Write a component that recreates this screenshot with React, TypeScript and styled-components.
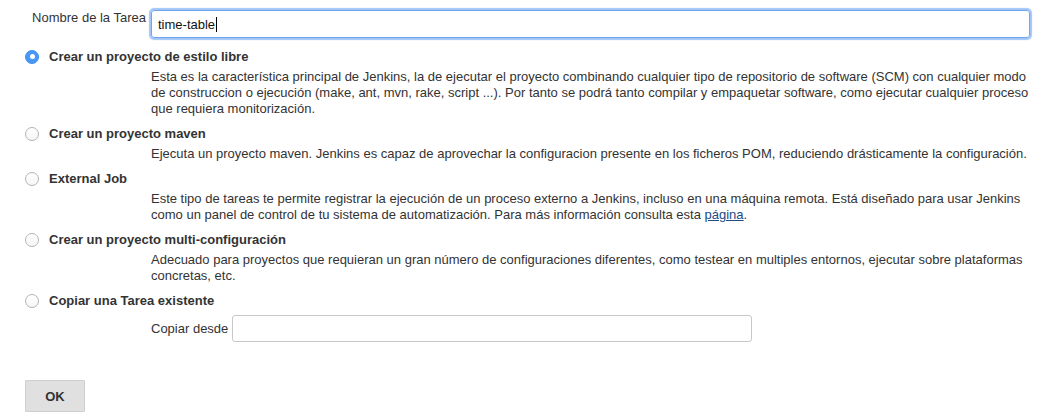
import React from "react";
import styled, { createGlobalStyle } from "styled-components";

const GlobalStyle = createGlobalStyle`
  html, body {
    margin: 0;
    padding: 0;
    background: #fff;
  }
  body {
    font-family: "Liberation Sans", Arial, Helvetica, sans-serif;
    font-size: 13px;
    color: #333;
  }
`;

const Page = styled.form`
  padding: 10px 0 0 0;
  width: 1039px;
  box-sizing: border-box;
`;

const NameRow = styled.div`
  display: flex;
  align-items: flex-start;
  padding-right: 9px;
`;

const NameLabel = styled.label`
  width: 151px;
  box-sizing: border-box;
  padding-right: 5px;
  text-align: right;
  line-height: 17px;
  margin-top: -1px;
  white-space: nowrap;
`;

const FocusedInput = styled.div`
  flex: 1;
  height: 28px;
  box-sizing: border-box;
  border: 1px solid #6ea5ee;
  border-radius: 3px;
  box-shadow: 0 0 1px 2px rgba(98, 158, 243, 0.6);
  padding: 0 6px;
  display: flex;
  align-items: center;
  color: #111;
`;

const Caret = styled.span`
  display: inline-block;
  width: 1px;
  height: 15px;
  background: #000;
  margin-left: 1px;
`;

const Options = styled.div`
  margin-top: 10px;
`;

const Option = styled.div`
  & + & {
    margin-top: 8px;
  }
`;

const OptionHeader = styled.label`
  display: flex;
  align-items: center;
  padding-left: 25px;
  gap: 10px;
  font-weight: bold;
  line-height: 17px;
`;

const Radio = styled.span<{ $checked?: boolean }>`
  width: 14px;
  height: 14px;
  box-sizing: border-box;
  border-radius: 50%;
  flex-shrink: 0;
  display: flex;
  align-items: center;
  justify-content: center;
  border: 1px solid ${(p) => (p.$checked ? "#3d8ef2" : "#b3b3b3")};
  background: ${(p) => (p.$checked ? "#4a97f5" : "linear-gradient(#fff, #f6f6f6)")};

  &::after {
    content: "";
    display: ${(p) => (p.$checked ? "block" : "none")};
    width: 5px;
    height: 5px;
    border-radius: 50%;
    background: #fff;
  }
`;

const Description = styled.div`
  padding: 0 5px 0 151px;
  margin-top: 4px;
  line-height: 16px;
`;

const Link = styled.a`
  color: #204a87;
  text-decoration: underline;
`;

const CopyRow = styled.div`
  display: flex;
  align-items: center;
  padding-left: 151px;
  margin-top: 6px;
  gap: 4px;
`;

const CopyInput = styled.input`
  width: 520px;
  height: 27px;
  box-sizing: border-box;
  border: 1px solid #c8c8c8;
  border-radius: 3px;
  padding: 0 6px;
  font: inherit;
  outline: none;
`;

const Footer = styled.div`
  padding: 38px 0 0 25px;
`;

const OkButton = styled.button`
  width: 60px;
  height: 32px;
  background: #e0e0e0;
  border: 1px solid #cfcfcf;
  border-radius: 1px;
  font-family: inherit;
  font-size: 13px;
  font-weight: bold;
  color: #333;
  padding: 0;
`;

const options = [
  {
    title: "Crear un proyecto de estilo libre",
    checked: true,
    text: (
      <>
        Esta es la característica principal de Jenkins, la de ejecutar el proyecto combinando cualquier tipo de
        repositorio de software (SCM) con cualquier modo de construccion o ejecución (make, ant, mvn, rake, script
        ...). Por tanto se podrá tanto compilar y empaquetar software, como ejecutar cualquier proceso que requiera
        monitorización.
      </>
    ),
  },
  {
    title: "Crear un proyecto maven",
    text: (
      <>
        Ejecuta un proyecto maven. Jenkins es capaz de aprovechar la configuracion presente en los ficheros POM,
        reduciendo drásticamente la configuración.
      </>
    ),
  },
  {
    title: "External Job",
    text: (
      <>
        Este tipo de tareas te permite registrar la ejecución de un proceso externo a Jenkins, incluso en una máquina
        remota. Está diseñado para usar Jenkins como un panel de control de tu sistema de automatización. Para más
        información consulta esta <Link href="#">página</Link>.
      </>
    ),
  },
  {
    title: "Crear un proyecto multi-configuración",
    text: (
      <>
        Adecuado para proyectos que requieran un gran número de configuraciones diferentes, como testear en multiples
        entornos, ejecutar sobre plataformas concretas, etc.
      </>
    ),
  },
];

export default function App() {
  return (
    <>
      <GlobalStyle />
      <Page onSubmit={(e) => e.preventDefault()}>
        <NameRow>
          <NameLabel>Nombre de la Tarea</NameLabel>
          <FocusedInput>
            time-table
            <Caret />
          </FocusedInput>
        </NameRow>

        <Options>
          {options.map((o) => (
            <Option key={o.title}>
              <OptionHeader>
                <Radio $checked={o.checked} />
                {o.title}
              </OptionHeader>
              <Description>{o.text}</Description>
            </Option>
          ))}
          <Option>
            <OptionHeader>
              <Radio />
              Copiar una Tarea existente
            </OptionHeader>
            <CopyRow>
              <span>Copiar desde</span>
              <CopyInput type="text" />
            </CopyRow>
          </Option>
        </Options>

        <Footer>
          <OkButton type="submit">OK</OkButton>
        </Footer>
      </Page>
    </>
  );
}
